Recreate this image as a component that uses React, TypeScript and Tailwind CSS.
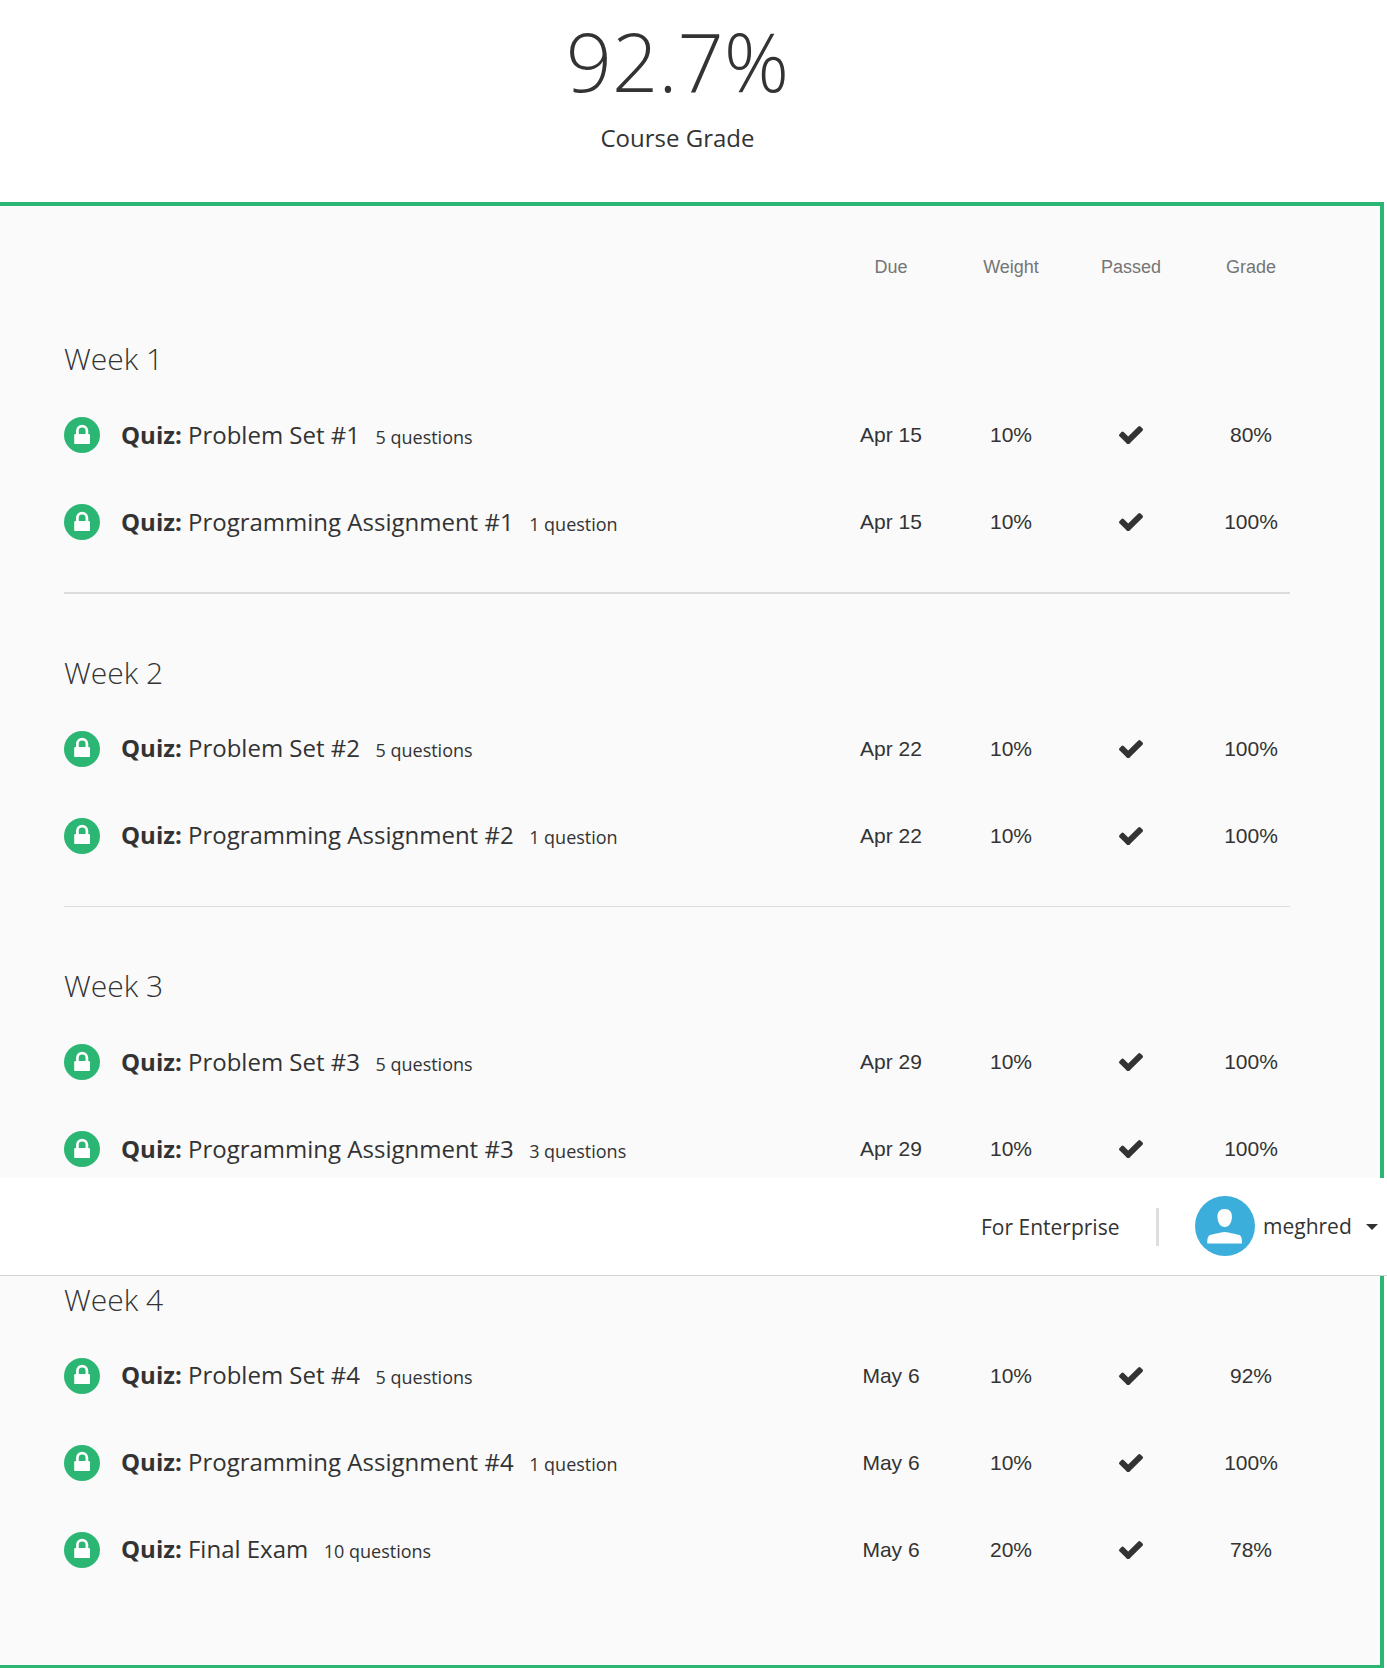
import React from "react";

type Item = { title: string; count: string; due: string; weight: string; grade: string };

const week = (n: number, due: string, g1: string, g2: string, c2: string): Item[] => [
  { title: `Problem Set #${n}`, count: "5 questions", due, weight: "10%", grade: g1 },
  { title: `Programming Assignment #${n}`, count: c2, due, weight: "10%", grade: g2 },
];

const week1 = week(1, "Apr 15", "80%", "100%", "1 question");
const week2 = week(2, "Apr 22", "100%", "100%", "1 question");
const week3 = week(3, "Apr 29", "100%", "100%", "3 questions");
const week4: Item[] = [
  ...week(4, "May 6", "92%", "100%", "1 question"),
  { title: "Final Exam", count: "10 questions", due: "May 6", weight: "20%", grade: "78%" },
];

function LockBadge({ raised }: { raised?: boolean }) {
  return (
    <svg className="block size-9 shrink-0" viewBox="0 0 36 36">
      <circle cx="18" cy="18" r="18" fill="#2bb673" />
      <g transform={raised ? "translate(0 -1)" : undefined}>
        <path d="M13.4 18v-4.2a4.75 4.75 0 0 1 9.5 0V18" fill="none" stroke="#fff" strokeWidth="2.7" />
        <rect x="10.2" y="17" width="15.8" height="10.1" rx="1.2" fill="#fff" />
      </g>
    </svg>
  );
}

function Check() {
  return (
    <svg className="block h-[18.4px] w-6" viewBox="121 334 1550 1188">
      <path
        fill="#333"
        d="M1671 566q0 40-28 68l-724 724-136 136q-28 28-68 28t-68-28l-136-136-362-362q-28-28-28-68t28-68l136-136q28-28 68-28t68 28l294 295 656-657q28-28 68-28t68 28l136 136q28 28 28 68z"
      />
    </svg>
  );
}

function Row({ item, raised }: { item: Item; raised?: boolean }) {
  return (
    <div className="mb-[51px] flex h-9 items-center">
      <LockBadge raised={raised} />
      <div
        className={
          raised
            ? "ml-[21px] flex-1 whitespace-nowrap text-[24px] leading-9"
            : "ml-[21px] mt-[2px] flex-1 whitespace-nowrap text-[24px] leading-9"
        }
      >
        <span className="font-bold">Quiz:</span> {item.title}
        <span className="ml-[15.5px] text-[18px]">{item.count}</span>
      </div>
      <div className="mr-[-21px] grid grid-cols-[repeat(4,120px)] items-center text-center font-['Liberation_Sans',Arial,sans-serif] text-[21px] leading-9">
        <span>{item.due}</span>
        <span>{item.weight}</span>
        <span className="flex justify-center">
          <Check />
        </span>
        <span>{item.grade}</span>
      </div>
    </div>
  );
}

function Week({ name, items, raised }: { name: string; items: Item[]; raised?: boolean }) {
  return (
    <section>
      <h2 className="mb-[38px] text-[30px] font-light leading-[41px]">{name}</h2>
      {items.map((item) => (
        <Row key={item.title} item={item} raised={raised} />
      ))}
    </section>
  );
}

export default function App() {
  return (
    <div className="h-[1668px] w-[1387px] overflow-hidden bg-white font-['Open_Sans',sans-serif] text-[#333]">
      <header className="flex h-[202px] w-[1355px] flex-col items-center">
        <div className="mt-[6px] text-[81px] font-light leading-[110px]">92.7%</div>
        <div className="mt-[4px] text-[24px] leading-9">Course Grade</div>
      </header>

      <div className="h-[976px] w-[1384px] overflow-hidden border-r-4 border-t-4 border-[#2bb673] bg-[#fafafa] pl-16 pr-[90px]">
        <div className="mr-[-21px] mt-[48px] grid grid-cols-[repeat(4,120px)] justify-end text-center font-['Liberation_Sans',Arial,sans-serif] text-[18px] leading-[27px] text-[#757575]">
          <span>Due</span>
          <span>Weight</span>
          <span>Passed</span>
          <span>Grade</span>
        </div>
        <div className="mt-[57px]">
          <Week name="Week 1" items={week1} />
        </div>
        <div className="mb-[58px] mt-[52px] h-[2px] bg-[#dcdcdc]" />
        <Week name="Week 2" items={week2} raised />
        <div className="mb-[58px] mt-[52px] h-px bg-[#dcdcdc]" />
        <Week name="Week 3" items={week3} />
      </div>

      <nav className="flex h-[98px] items-center border-b border-[#d6d6d6] bg-white pl-[981px] text-[21px]">
        <span className="mt-[3px] w-[175px] shrink-0 whitespace-nowrap">For Enterprise</span>
        <span className="mt-px h-[38px] w-[3px] shrink-0 bg-[#dedede]" />
        <svg className="mb-px ml-[36px] size-[60px] shrink-0" viewBox="0 0 60 60">
          <circle cx="30" cy="30" r="30" fill="#3caedb" />
          <path
            fill="#fff"
            d="M29.7 13c5 0 7.4 3 7.2 8.2-.2 5.7-3 9.8-7.2 9.8s-7-4.1-7.2-9.800C22.300 16 24.700 13 29.700 13zM12.300 47.600c0-4 .2-7.500 2.700-8.500 2.600-1.100 7-1.300 11-2.600 2.500-.8 4.900-.8 7.400 0 4 1.300 8.200 1.500 10.900 2.600 2.500 1 2.700 4.500 2.700 8.500z"
          />
        </svg>
        <span className="ml-2 w-[103px] shrink-0">meghred</span>
        <svg className="mt-px h-[6px] w-3 shrink-0" viewBox="0 0 12 6">
          <path d="M0 0h12L6 6z" fill="#333" />
        </svg>
      </nav>

      <div className="h-[392px] w-[1384px] border-b-[3px] border-r-4 border-[#2bb673] bg-[#fafafa] pl-16 pr-[90px] pt-[3px]">
        <Week name="Week 4" items={week4} raised />
      </div>
    </div>
  );
}
